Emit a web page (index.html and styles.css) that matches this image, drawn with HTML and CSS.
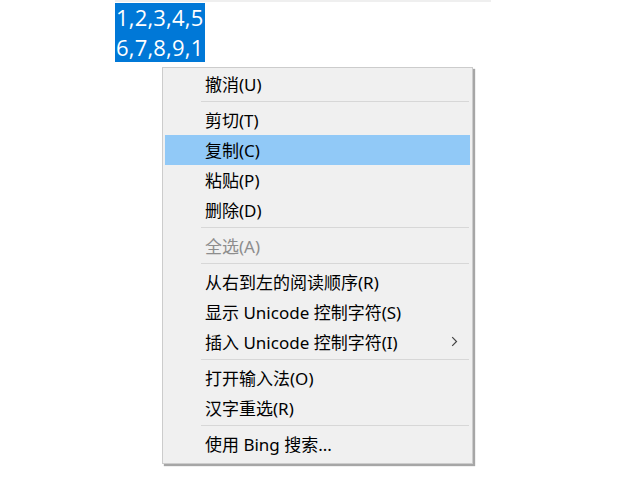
FILE: index.html
```html
<!DOCTYPE html>
<html lang="zh-CN">
<head>
<meta charset="utf-8">
<link rel="stylesheet" href="styles.css">
</head>
<body>
<div class="editor">
  <div class="selection">1,2,3,4,5<br>6,7,8,9,1</div>
</div>
<div class="menu">
  <div class="item">撤消(U)</div>
  <div class="sep"></div>
  <div class="item">剪切(T)</div>
  <div class="item active">复制(C)</div>
  <div class="item">粘贴(P)</div>
  <div class="item">删除(D)</div>
  <div class="sep"></div>
  <div class="item disabled">全选(A)</div>
  <div class="sep"></div>
  <div class="item">从右到左的阅读顺序(R)</div>
  <div class="item">显示 Unicode 控制字符(S)</div>
  <div class="item">插入 Unicode 控制字符(I)<svg class="chev" width="7" height="11" viewBox="0 0 7 11"><path d="M1.2 1.2 L5.5 5.5 L1.2 9.8" fill="none" stroke="#444" stroke-width="1.2"/></svg></div>
  <div class="sep"></div>
  <div class="item">打开输入法(O)</div>
  <div class="item">汉字重选(R)</div>
  <div class="sep"></div>
  <div class="item">使用 Bing 搜索...</div>
</div>
</body>
</html>
```
FILE: styles.css
```css
html, body {
  margin: 0;
  padding: 0;
  background: #ffffff;
  width: 640px;
  height: 480px;
  overflow: hidden;
}
body {
  font-family: "Noto Sans", "Noto Sans CJK SC", sans-serif;
}
.editor {
  margin-left: 115px;
  width: 376px;
  border-top: 2px solid #efefef;
  padding-top: 1px;
}
.selection {
  display: inline-block;
  background: #0078d7;
  color: #ffffff;
  font-family: "Open Sans", "Noto Sans", sans-serif;
  font-size: 22px;
  line-height: 29.5px;
  padding: 0 2px 0 1px;
  letter-spacing: 0.2px;
}
.menu {
  position: absolute;
  left: 162px;
  top: 67px;
  width: 305px;
  background: #f0f0f0;
  border: 1px solid #cccccc;
  box-shadow: 2px 2px 1px rgba(0, 0, 0, 0.35);
  padding: 1px 2px 4px 2px;
  font-family: "Noto Sans", "Noto Sans CJK SC", sans-serif;
  font-size: 17px;
  color: #000000;
}
.item {
  display: flex;
  align-items: center;
  box-sizing: border-box;
  height: 30px;
  padding-left: 40px;
  padding-right: 12px;
  padding-bottom: 2px;
  white-space: nowrap;
}
.item.active {
  background: #91c9f7;
}
.item.disabled {
  color: #8d8d8d;
}
.chev {
  margin-left: auto;
}
.sep {
  height: 1px;
  margin: 2px 1px 3px 36px;
  background: #d7d7d7;
}
```
